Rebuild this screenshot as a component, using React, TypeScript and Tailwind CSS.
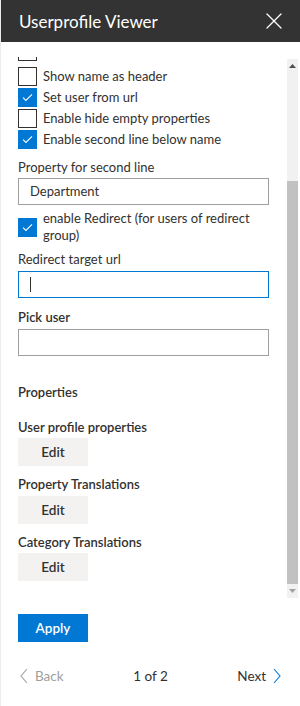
import React from 'react';
import { X } from 'lucide-react';

const font = { fontFamily: 'Lato, "Open Sans", sans-serif' };

const Box = ({ checked }: { checked?: boolean }) => (
  <span
    className={
      'flex h-[19px] w-[19px] shrink-0 items-center justify-center border ' +
      (checked ? 'border-[#0078d4] bg-[#0078d4]' : 'border-[#323130] bg-white')
    }
  >
    {checked && (
      <svg width="11" height="9" viewBox="0 0 11 9" fill="none">
        <path d="M1 4.6 L3.9 7.4 L10 1.3" stroke="white" strokeWidth="1.1" />
      </svg>
    )}
  </span>
);

const CheckRow = ({ label, checked }: { label: string; checked?: boolean }) => (
  <div className="flex h-[19px] items-center gap-[6px]">
    <Box checked={checked} />
    <span className="text-[13px] leading-[19px] text-[#323130]">{label}</span>
  </div>
);

const Label = ({
  children,
  className = '',
  bold = true,
}: {
  children: React.ReactNode;
  className?: string;
  bold?: boolean;
}) => (
  <div
    className={
      'h-[20px] text-[13px] leading-[20px] text-[#323130] ' + (bold ? 'font-semibold ' : 'font-normal ') + className
    }
  >
    {children}
  </div>
);

const EditButton = ({ className = '' }: { className?: string }) => (
  <button className={'h-[28px] w-[70px] bg-[#f3f2f1] text-[13.5px] font-semibold text-[#323130] ' + className}>
    Edit
  </button>
);

export default function App() {
  return (
    <div className="flex h-[706px] w-[300px] flex-col border-l border-[#ececec] bg-white" style={font}>
      <header className="flex h-[42px] shrink-0 items-center justify-between bg-[#333333] pl-[18px] pr-[12px]">
        <h1 className="text-[17px] font-normal leading-none text-white">Userprofile Viewer</h1>
        <X className="h-[28px] w-[28px] text-white" strokeWidth={1.1} />
      </header>

      <div className="mt-[15px] flex h-[541px] shrink-0">
        <div className="flex-1 overflow-hidden pl-[17px] pr-[18px]">
          <div className="-mt-[15px]">
            <Box />
          </div>
          <div className="mt-[6px] flex flex-col gap-[2px]">
            <CheckRow label="Show name as header" />
            <CheckRow label="Set user from url" checked />
            <CheckRow label="Enable hide empty properties" />
            <CheckRow label="Enable second line below name" checked />
          </div>

          <Label className="mt-[8px]" bold={false}>
            Property for second line
          </Label>
          <div className="mt-[1px] flex h-[27px] items-center border border-[#a19f9d] px-[11px] text-[13px] text-[#323130]">
            Department
          </div>

          <div className="mt-[5px] flex items-center gap-[6px]">
            <Box checked />
            <span className="text-[13px] leading-[17px] text-[#323130]">
              enable Redirect (for users of redirect group)
            </span>
          </div>

          <Label className="mt-[5px]" bold={false}>
            Redirect target url
          </Label>
          <div className="mt-[2px] flex h-[27px] items-center border border-[#0078d4] px-[11px]">
            <span className="h-[15px] w-px bg-[#323130]" />
          </div>

          <Label className="mt-[9px]">Pick user</Label>
          <div className="mt-[2px] h-[27px] border border-[#a19f9d]" />

          <Label className="mt-[26px]">Properties</Label>

          <Label className="mt-[15px]">User profile properties</Label>
          <EditButton className="mt-[1px]" />

          <Label className="mt-[8px]">Property Translations</Label>
          <EditButton className="mt-[2px]" />

          <Label className="mt-[8px]">Category Translations</Label>
          <EditButton className="mt-[1px]" />
        </div>

        <div className="mr-[2px] mt-[2px] flex w-[11px] flex-col bg-[#f1f1f1]">
          <div className="flex h-[14px] items-center justify-center">
            <svg width="7" height="4" viewBox="0 0 7 4">
              <path d="M0 4 L3.5 0 L7 4 Z" fill="#505050" />
            </svg>
          </div>
          <div className="h-[108px]" />
          <div className="flex-1 bg-[#c1c1c1]" />
          <div className="flex h-[14px] items-center justify-center">
            <svg width="7" height="4" viewBox="0 0 7 4">
              <path d="M0 0 L7 0 L3.5 4 Z" fill="#a3a3a3" />
            </svg>
          </div>
        </div>
      </div>

      <div className="pl-[17px]">
        <button className="mt-[16px] h-[28px] w-[70px] border border-[#0078d4] bg-[#0078d4] text-[13.5px] font-semibold text-white">
          Apply
        </button>
      </div>

      <div className="mt-[24px] flex h-[20px] items-center justify-between pl-[19px] pr-[19px] text-[13.5px]">
        <span className="flex items-center gap-[7px] text-[#a19f9d]">
          <svg width="8" height="16" viewBox="0 0 8 16" fill="none">
            <path d="M7 1 L1 8 L7 15" stroke="#a19f9d" strokeWidth="1.1" />
          </svg>
          Back
        </span>
        <span className="text-[#323130]">1 of 2</span>
        <span className="flex items-center gap-[7px] text-[#323130]">
          Next
          <svg width="8" height="16" viewBox="0 0 8 16" fill="none">
            <path d="M1 1 L7 8 L1 15" stroke="#0078d4" strokeWidth="1.1" />
          </svg>
        </span>
      </div>
    </div>
  );
}
